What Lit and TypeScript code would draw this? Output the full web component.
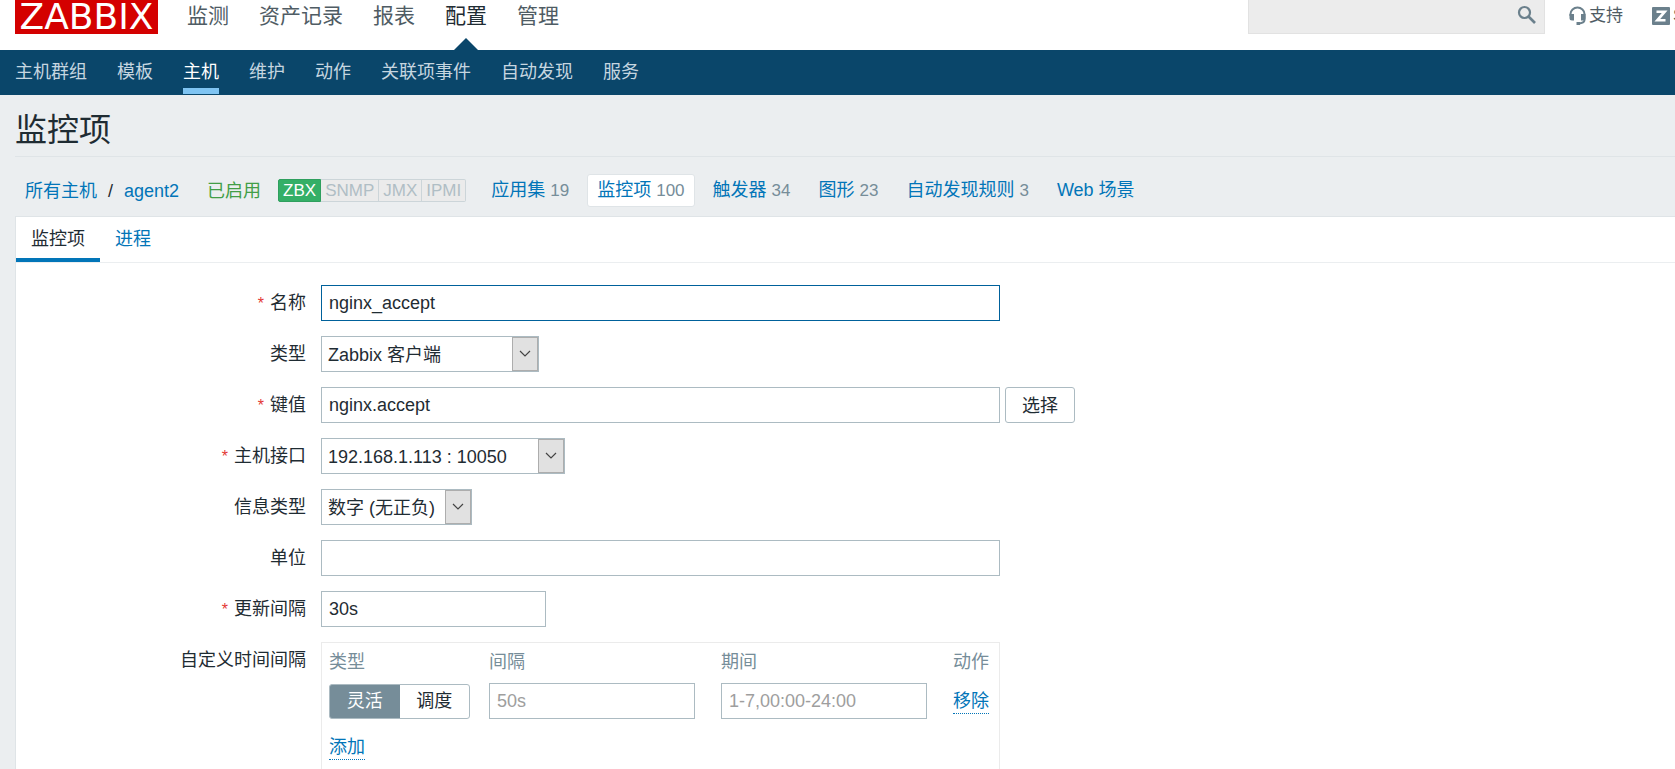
import { LitElement, html, css } from "lit";
import { customElement } from "lit/decorators.js";

const mainMenu = ["监测", "资产记录", "报表", "配置", "管理"];
const subMenu = ["主机群组", "模板", "主机", "维护", "动作", "关联项事件", "自动发现", "服务"];
const hostLinks: { label: string; count?: number }[] = [
  { label: "应用集", count: 19 },
  { label: "监控项", count: 100 },
  { label: "触发器", count: 34 },
  { label: "图形", count: 23 },
  { label: "自动发现规则", count: 3 },
  { label: "Web 场景" },
];

@customElement("zbx-header")
export class ZbxHeader extends LitElement {
  static styles = css`
    :host { display: block; font-size: 18px; }
    * { box-sizing: border-box; }
    a { text-decoration: none; }
    ul { display: flex; margin: 0; padding: 0; list-style: none; gap: 30px; }
    .top { display: flex; align-items: flex-start; height: 50px; padding-left: 15px; background: #fff; overflow: hidden; }
    .logo { flex: none; width: 143px; height: 34px; background: #d40000; color: #fff; font: 36px/33px "DejaVu Sans", sans-serif; text-align: center; }
    .main { flex: 1; padding-left: 29px; }
    .main a { display: block; position: relative; height: 50px; font-size: 21px; line-height: 32px; color: #4f5c64; white-space: nowrap; }
    .main a.on { color: #1f2c33; }
    .main a.on::after { content: ""; position: absolute; left: 50%; bottom: 0; margin-left: -12px; border: 12px solid transparent; border-top: 0; border-bottom-color: #0a466a; }
    .search { display: flex; width: 297px; height: 34px; background: #ececec; border: 1px solid #e2e2e2; border-top: 0; }
    .search input { flex: 1; min-width: 0; border: 0; padding: 0 8px; background: none; font: inherit; outline: 0; }
    .search button { width: 27px; height: 30px; padding: 0; border: 0; background: none; }
    svg { display: block; flex: none; }
    .tools { display: flex; gap: 29px; width: 130px; padding-left: 24px; font-size: 17px; line-height: 34px; white-space: nowrap; overflow: hidden; }
    .tools a { display: flex; flex: none; align-items: center; height: 32px; gap: 3px; color: #4f5c64; }
    .sub { height: 45px; padding-left: 15px; background: #0a466a; }
    .sub a { display: block; height: 44px; line-height: 44px; color: #c6d6e0; white-space: nowrap; }
    .sub a.on { color: #fff; border-bottom: 6px solid #7fc4f2; }
  `;

  render() {
    return html`
      <header class="top">
        <a class="logo" href="#">ZABBIX</a>
        <nav class="main"><ul>
          ${mainMenu.map((t) => html`<li><a href="#" class=${t === "配置" ? "on" : ""}>${t}</a></li>`)}
        </ul></nav>
        <form class="search" role="search">
          <input type="text" aria-label="搜索" />
          <button type="button" aria-label="搜索">
            <svg width="20" height="20" viewBox="0 0 20 20" fill="none" stroke="#6b808c">
              <circle cx="7.5" cy="7.5" r="5.5" stroke-width="2.2" /><path d="M11.5 11.5l6.5 6.5" stroke-width="2.6" />
            </svg>
          </button>
        </form>
        <div class="tools">
          <a href="#">
            <svg width="17" height="20" viewBox="0 0 17 20" fill="none" stroke="#6b808c" stroke-width="2">
              <path d="M1.500 10V8a7 6.500 0 0 1 14 0v6c0 2-2 3-5 3.500" />
              <path d="M0.500 8h4.500v6.500H3a2.500 2.500 0 0 1-2.500-2.500zM16.500 8h-4.500v6.500h2a2.500 2.500 0 0 0 2.500-2.500z" fill="#6b808c" stroke="none" />
              <path d="M7.500 17.500h3.500" stroke-width="3" />
            </svg>支持</a>
          <a href="#">
            <svg width="18" height="18" viewBox="0 0 18 18">
              <rect width="18" height="18" rx="1" fill="#6b808c" />
              <path d="M4.500 4.700h8.200L5.300 13.300h8.200" fill="none" stroke="#fff" stroke-width="2.6" />
            </svg>Share</a>
        </div>
      </header>
      <nav class="sub"><ul>
        ${subMenu.map((t) => html`<li><a href="#" class=${t === "主机" ? "on" : ""}>${t}</a></li>`)}
      </ul></nav>`;
  }
}

const dropDown = (id: string, size: string, value: string) => html`
  <div class="select ${size}">
    <select id=${id}><option>${value}</option></select>
    <span class="arrow"><svg width="12" height="8" viewBox="0 0 12 8" fill="none" stroke="#444" stroke-width="1.2"><path d="M1 1l5 5 5-5" /></svg></span>
  </div>`;

@customElement("app-root")
export class AppRoot extends LitElement {
  static styles = css`
    :host { display: block; height: 100vh; overflow: hidden; background: #ebeef0; color: #1f2c33; font: 18px/24px "Liberation Sans", "Noto Sans CJK SC", sans-serif; }
    * { box-sizing: border-box; }
    a { color: #0275b8; text-decoration: none; }
    main { padding-left: 15px; }
    h1 { margin: 0; height: 62px; font-size: 32px; line-height: 70px; font-weight: 400; border-bottom: 1px solid #dfe4e7; }
    .path { display: flex; align-items: center; height: 59px; padding: 8px 0 0 10px; white-space: nowrap; }
    .slash { padding: 0 11px; }
    .enabled { margin: 0 17px 0 28px; color: #429e47; }
    .avail { display: flex; margin-right: 15px; }
    .avail span { height: 23px; padding: 0 4px; border: 1px solid #ccd5d9; border-left-width: 0; font-size: 17px; line-height: 22px; color: #b0bec5; background: #ebebeb; }
    .avail .ok { color: #fff; background: #34af67; border-color: #2f9f5e; border-left-width: 1px; border-radius: 2px 0 0 2px; }
    .avail span:last-child { border-radius: 0 2px 2px 0; }
    .links { display: flex; gap: 8px; }
    .links a { height: 33px; padding: 0 9px; line-height: 31px; border: 1px solid transparent; border-radius: 3px; }
    .links a.on { background: #fff; border-color: #dfe4e7; }
    .count { font-size: 17px; color: #768d99; }
    .panel { border: 1px solid #dfe4e7; border-right: 0; background: #fff; min-height: 600px; }
    .tabs { display: flex; height: 46px; border-bottom: 1px solid #ebeef0; }
    .tabs a { padding: 0 15px; line-height: 44px; }
    .tabs a.on { color: #1f2c33; border-bottom: 4px solid #0275b8; }
    .form { display: grid; grid-template-columns: 290px minmax(0, 1fr); gap: 15px; padding-top: 22px; }
    .form > label, .caption { text-align: right; line-height: 36px; height: 36px; }
    .req::before { content: "*"; color: #e33734; font-size: 16px; margin-right: 6px; }
    .field { display: flex; gap: 5px; }
    input { width: 100%; height: 36px; margin: 0; padding: 0 7px; border: 1px solid #acbbc2; border-radius: 0; background: #fff; color: #1f2c33; font: inherit; outline: 0; }
    input::placeholder { color: #9e9e9e; opacity: 1; }
    .wide { max-width: 679px; }
    .short { max-width: 225px; }
    .current { border-color: #00619b; }
    .btn { height: 36px; padding: 2px 16px 0; border: 1px solid #acbbc2; border-radius: 3px; background: #fff; color: #1f2c33; font: inherit; white-space: nowrap; }
    .select { display: grid; width: 218px; height: 36px; }
    .select > * { grid-area: 1 / 1; }
    .select.medium { width: 244px; }
    .select.tight { width: 151px; }
    select { appearance: none; width: 100%; height: 36px; margin: 0; padding: 2px 27px 0 6px; border: 1px solid #acbbc2; border-radius: 0; background: #fff; color: #1f2c33; font: inherit; }
    .arrow { justify-self: end; display: grid; place-items: center; width: 26px; height: 34px; margin: 1px 1px 0 0; border: 1px solid #adadad; background: #e1e1e1; pointer-events: none; }
    .box { max-width: 679px; padding: 7px; border: 1px solid #ebebeb; border-bottom: 0; min-height: 170px; }
    table { width: 660px; border-collapse: collapse; table-layout: fixed; }
    th, td { padding: 0; text-align: left; vertical-align: middle; }
    th { height: 24px; font-weight: 400; color: #768d99; }
    .row td { padding-top: 9px; }
    .more td { padding-top: 16px; }
    .c1 { width: 160px; }
    .c2 { width: 232px; }
    .row input { width: 206px; }
    .seg { display: flex; width: 141px; margin: 0; padding: 0; border: 1px solid #acbbc2; border-radius: 3px; height: 35px; overflow: hidden; background: linear-gradient(90deg, #768d99 50%, #fff 50%) border-box; }
    .seg label { position: relative; flex: 1; text-align: center; line-height: 33px; }
    .seg input { position: absolute; inset: 0; width: 100%; height: 100%; opacity: 0; }
    .seg .on { color: #fff; }
    .act { display: inline-block; line-height: 22px; height: 24px; border-bottom: 1px dotted #0275b8; }
  `;

  render() {
    return html`
      <zbx-header></zbx-header>
      <main>
        <h1>监控项</h1>
        <div class="path">
          <a href="#">所有主机</a><span class="slash">/</span><a href="#">agent2</a>
          <span class="enabled">已启用</span>
          <div class="avail"><span class="ok">ZBX</span><span>SNMP</span><span>JMX</span><span>IPMI</span></div>
          <nav class="links">
            ${hostLinks.map((l) => html`<a href="#" class=${l.label === "监控项" ? "on" : ""}>${l.label}${l.count ? html` <span class="count">${l.count}</span>` : ""}</a>`)}
          </nav>
        </div>
        <section class="panel">
          <nav class="tabs"><a href="#" class="on">监控项</a><a href="#">进程</a></nav>
          <form class="form">
            <label class="req" for="name">名称</label>
            <div class="field"><input id="name" class="wide current" type="text" .value=${"nginx_accept"} /></div>
            <label for="type">类型</label>
            ${dropDown("type", "", "Zabbix 客户端")}
            <label class="req" for="key">键值</label>
            <div class="field"><input id="key" class="wide" type="text" .value=${"nginx.accept"} /><button class="btn" type="button">选择</button></div>
            <label class="req" for="iface">主机接口</label>
            ${dropDown("iface", "medium", "192.168.1.113 : 10050")}
            <label for="vtype">信息类型</label>
            ${dropDown("vtype", "tight", "数字 (无正负)")}
            <label for="units">单位</label>
            <div class="field"><input id="units" class="wide" type="text" /></div>
            <label class="req" for="delay">更新间隔</label>
            <div class="field"><input id="delay" class="short" type="text" .value=${"30s"} /></div>
            <div class="caption">自定义时间间隔</div>
            <div class="box">
              <table>
                <thead><tr><th class="c1">类型</th><th class="c2">间隔</th><th class="c2">期间</th><th>动作</th></tr></thead>
                <tbody>
                  <tr class="row">
                    <td><div class="seg" role="radiogroup" aria-label="类型">
                      <label class="on"><input type="radio" name="kind" checked />灵活</label>
                      <label><input type="radio" name="kind" />调度</label>
                    </div></td>
                    <td><input type="text" aria-label="间隔" placeholder="50s" /></td>
                    <td><input type="text" aria-label="期间" placeholder="1-7,00:00-24:00" /></td>
                    <td><a class="act" href="#">移除</a></td>
                  </tr>
                  <tr class="more"><td colspan="4"><a class="act" href="#">添加</a></td></tr>
                </tbody>
              </table>
            </div>
          </form>
        </section>
      </main>`;
  }
}
